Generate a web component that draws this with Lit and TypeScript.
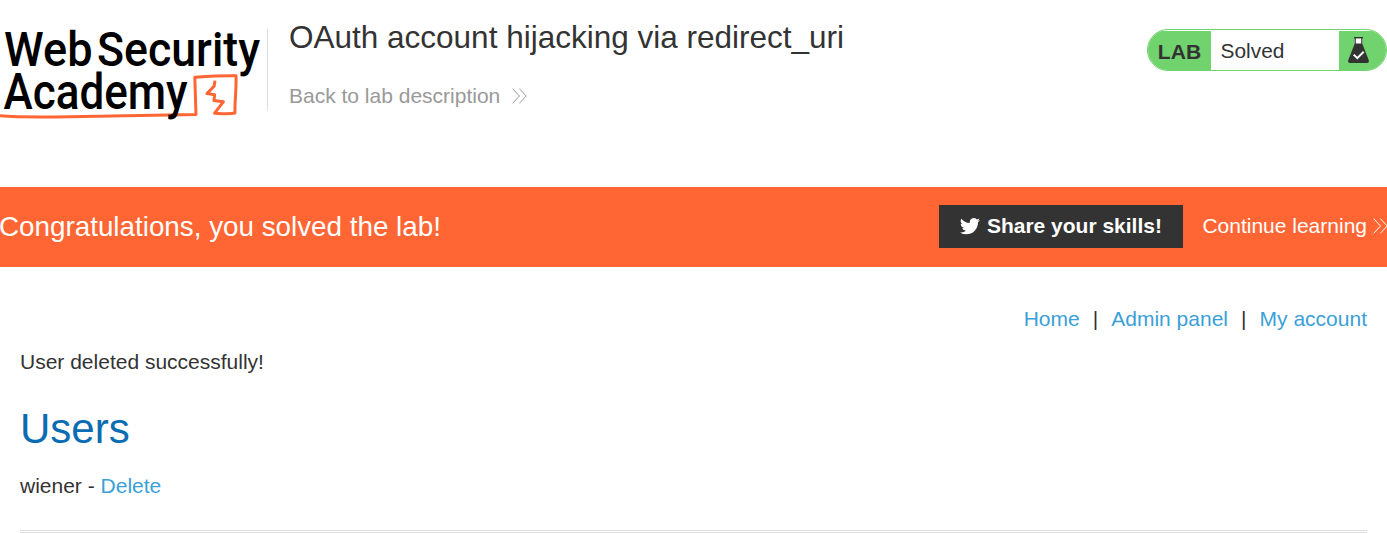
import { LitElement, html, css, svg } from "lit";
import { customElement } from "lit/decorators.js";

const chevrons = html`<svg class="chevrons" width="15" height="16" viewBox="0 0 15 16">
  ${svg`<path d="M.7.7 7.5 8 .7 15.3M7.4.7 14.2 8l-6.8 7.3" fill="none" stroke="currentColor" stroke-width="1"/>`}
</svg>`;

@customElement("academy-logo")
export class AcademyLogo extends LitElement {
  static styles = css`
    :host { display: block; width: 267px; height: 124px; }
    svg { display: block; overflow: visible; }
    text { font-family: Roboto, "Liberation Sans", sans-serif; font-weight: 500; fill: #000; }
  `;
  render() {
    return html`<svg width="267" height="124" viewBox="0 0 267 124" role="img" aria-label="Web Security Academy">
      <path d="M0 115.8 C18 117.4 40 117.2 70 116.7 S140 115.4 196 114.6 L194.8 77.2 C208 76.4 222 75.6 236 75.8 C236.6 88 234.6 101 235 113 C229 114.4 222 113.6 214.6 113.2 L223.3 101.8 L214 100.6 L214.6 94.8 L207 93.6 L214.2 86 L215 80.6" fill="none" stroke="#ff6633" stroke-width="3" stroke-linejoin="round"/>
      <text x="4" y="66.3" font-size="49" textLength="88.5" lengthAdjust="spacingAndGlyphs">Web</text>
      <text x="97" y="66.3" font-size="49" textLength="163" lengthAdjust="spacingAndGlyphs">Security</text>
      <text x="3.6" y="109.3" font-size="49.5" textLength="184" lengthAdjust="spacingAndGlyphs">Academy</text>
    </svg>`;
  }
}

@customElement("lab-status")
export class LabStatus extends LitElement {
  static styles = css`
    :host { display: block; }
    .pill { box-sizing: border-box; width: 240px; height: 42px; display: flex; border: 1px solid #70d36d; border-radius: 21px; overflow: hidden; background: #fff; padding-top: 1px; line-height: 41px; }
    .tag { width: 63px; background: #70d36d; color: #333; font-weight: bold; font-size: 21.1px; text-align: center; }
    .state { flex: 1; padding-left: 9.5px; font-size: 20.9px; line-height: 39px; }
    .flask { width: 47px; background: #70d36d; }
    svg { display: block; }
  `;
  render() {
    return html`<div class="pill">
      <div class="tag">LAB</div>
      <div class="state">Solved</div>
      <div class="flask">
        <svg width="47" height="39" viewBox="0 0 47 39">
          <path d="M15.5 7.5V13h8V7.5z" fill="#fff"/>
          <path d="M15 6.6h9M16.2 7v6M22.8 7v6" stroke="#333" stroke-width="1.2" fill="none"/>
          <path d="M15.8 12.5h7.4l6.5 16.4q1 3-2 3H11.3q-3 0-2-3z" fill="#333"/>
          <path d="m14.7 23.6 3.6 3.6 6.4-6.4" fill="none" stroke="#fff" stroke-width="2"/>
        </svg>
      </div>
    </div>`;
  }
}

@customElement("app-root")
export class AppRoot extends LitElement {
  static styles = css`
    :host { display: block; height: 533px; overflow: hidden; background: #fff; color: #333; font: 21px/26px "Liberation Sans", Arial, sans-serif; }
    a { color: #3b9fd8; text-decoration: none; }
    h1, h2, h4, p { margin: 0; font-weight: normal; }
    .header { display: flex; height: 187px; }
    .divider { width: 1px; height: 82px; margin: 29px 21px 0 0; background: #dedede; }
    .title { flex: 1; padding-top: 17px; }
    .title h2 { font-size: 31.5px; line-height: 40px; }
    .back { display: inline-flex; align-items: center; gap: 12px; margin-top: 26px; color: #999; }
    .status { padding-top: 29px; }
    .banner { display: flex; align-items: center; height: 80px; background: #ff6633; color: #fff; white-space: nowrap; overflow: hidden; }
    .banner h4 { flex: 1; font-size: 27.8px; line-height: 36px; text-indent: -1px; }
    .share { box-sizing: border-box; display: flex; align-items: center; width: 244px; height: 43px; margin: -2px 19px 0 0; padding-left: 21px; gap: 6.5px; background: #333; color: #fff; font-weight: bold; }
    .continue { display: flex; align-items: center; gap: 6px; color: #fff; margin: -2px -1px 0 0; }
    .chevrons { display: block; flex: none; }
    .content { padding: 39px 20px 0; }
    .nav { display: flex; justify-content: flex-end; }
    .sep { width: 31.6px; text-align: center; }
    .message { margin-top: 17px; }
    h1 { font-size: 42px; line-height: 50px; margin-top: 29px; color: #0a6cb2; }
    .user { margin-top: 19px; }
    .rule { margin-top: 31px; height: 1px; border: solid #dedede; border-width: 1px 0; }
  `;
  render() {
    return html`
      <div class="header">
        <academy-logo></academy-logo>
        <div class="divider"></div>
        <div class="title">
          <h2>OAuth account hijacking via redirect_uri</h2>
          <a class="back">Back to lab description ${chevrons}</a>
        </div>
        <div class="status"><lab-status></lab-status></div>
      </div>
      <div class="banner">
        <h4>Congratulations, you solved the lab!</h4>
        <a class="share"><svg width="20" height="18" viewBox="0 1.5 24 20.5"><path fill="#fff" d="M23.95 4.57a10 10 0 0 1-2.82.77 4.96 4.96 0 0 0 2.16-2.72c-.95.55-2 .96-3.13 1.18a4.92 4.92 0 0 0-8.38 4.48C7.69 8.1 4.07 6.13 1.64 3.16a4.92 4.92 0 0 0 1.52 6.57 4.9 4.9 0 0 1-2.23-.61v.06a4.92 4.92 0 0 0 3.95 4.83 5 5 0 0 1-2.21.08 4.94 4.94 0 0 0 4.6 3.42A9.87 9.87 0 0 1 0 19.54a13.99 13.99 0 0 0 7.55 2.21c9.05 0 14-7.5 14-13.98 0-.21 0-.42-.02-.63a9.94 9.94 0 0 0 2.42-2.57z"/></svg>Share your skills!</a>
        <a class="continue">Continue learning ${chevrons}</a>
      </div>
      <div class="content">
        <div class="nav"><a>Home</a><span class="sep">|</span><a>Admin panel</a><span class="sep">|</span><a>My account</a></div>
        <p class="message">User deleted successfully!</p>
        <h1>Users</h1>
        <p class="user">wiener - <a>Delete</a></p>
        <div class="rule"></div>
      </div>`;
  }
}
